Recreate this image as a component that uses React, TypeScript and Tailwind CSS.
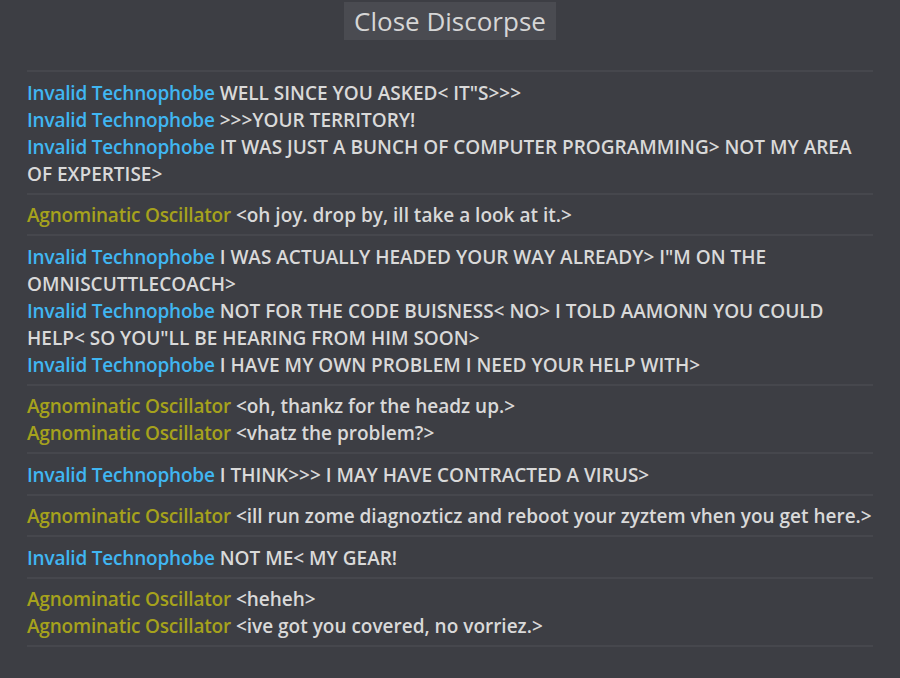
type Line = { who: "it" | "ao"; text: string };

const IT = "Invalid Technophobe";
const AO = "Agnominatic Oscillator";

const groups: Line[][] = [
  [
    { who: "it", text: 'WELL SINCE YOU ASKED< IT"S>>>' },
    { who: "it", text: ">>>YOUR TERRITORY!" },
    { who: "it", text: "IT WAS JUST A BUNCH OF COMPUTER PROGRAMMING> NOT MY AREA OF EXPERTISE>" },
  ],
  [{ who: "ao", text: "<oh joy. drop by, ill take a look at it.>" }],
  [
    { who: "it", text: 'I WAS ACTUALLY HEADED YOUR WAY ALREADY> I"M ON THE OMNISCUTTLECOACH>' },
    { who: "it", text: 'NOT FOR THE CODE BUISNESS< NO> I TOLD AAMONN YOU COULD HELP< SO YOU"LL BE HEARING FROM HIM SOON>' },
    { who: "it", text: "I HAVE MY OWN PROBLEM I NEED YOUR HELP WITH>" },
  ],
  [
    { who: "ao", text: "<oh, thankz for the headz up.>" },
    { who: "ao", text: "<vhatz the problem?>" },
  ],
  [{ who: "it", text: "I THINK>>> I MAY HAVE CONTRACTED A VIRUS>" }],
  [{ who: "ao", text: "<ill run zome diagnozticz and reboot your zyztem vhen you get here.>" }],
  [{ who: "it", text: "NOT ME< MY GEAR!" }],
  [
    { who: "ao", text: "<heheh>" },
    { who: "ao", text: "<ive got you covered, no vorriez.>" },
  ],
];

export default function App() {
  return (
    <div
      className="min-h-[678px] w-full bg-[#3d3e44] pt-[2px]"
      style={{ fontFamily: '"Open Sans", "Noto Sans", sans-serif' }}
    >
      <div className="flex justify-center">
        <button className="h-[38px] bg-[#4a4b51] px-[10px] text-[26px] leading-[38px] text-[#d6d6d6]">
          Close Discorpse
        </button>
      </div>
      <div className="mx-[27px] mt-[30px] border-t-2 border-[#46474d]">
        {groups.map((g, i) => (
          <div key={i} className="border-b-2 border-[#46474d] pt-[7.5px] pb-[5px]">
            {g.map((l, j) => (
              <p key={j} className="text-[19px] leading-[27px] font-semibold text-[#d9d9d9]">
                <span
                  className={
                    l.who === "it"
                      ? "tracking-[-0.2px] text-[#40b6f2]"
                      : "tracking-[-0.2px] text-[#a6a21c]"
                  }
                >
                  {l.who === "it" ? IT : AO}
                </span>{" "}
                {l.text}
              </p>
            ))}
          </div>
        ))}
      </div>
    </div>
  );
}
